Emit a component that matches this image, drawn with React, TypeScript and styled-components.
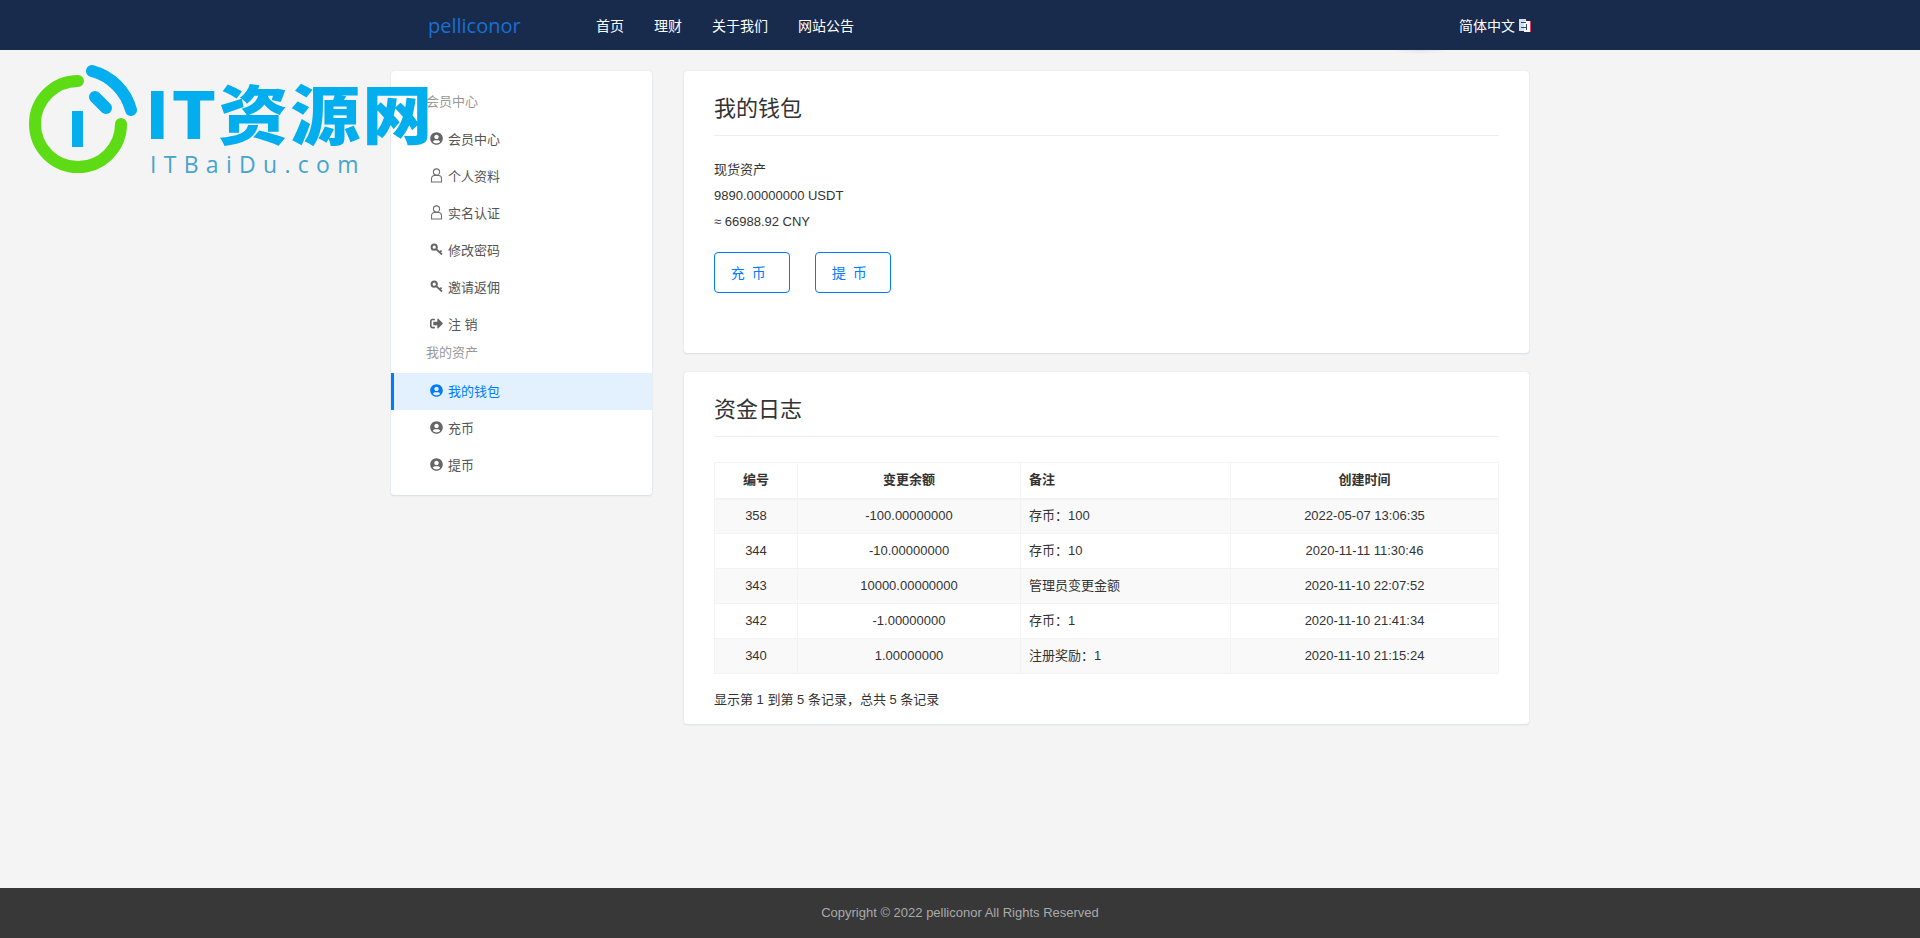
import React from "react";
import styled, { createGlobalStyle } from "styled-components";
import { FaSignOutAlt, FaUserCircle } from "react-icons/fa";

const GlobalStyle = createGlobalStyle`
  html, body {
    margin: 0;
    padding: 0;
    background: #f4f4f4;
    font-family: "Liberation Sans", "Noto Sans CJK SC", sans-serif;
    font-size: 13px;
    color: #333;
  }
  * { box-sizing: border-box; }
`;

const Page = styled.div`
  position: relative;
  min-height: 938px;
  display: flex;
  flex-direction: column;
`;

const Header = styled.header`
  position: relative;
  height: 50px;
  background: #182b4d;
`;

const HeaderInner = styled.div`
  width: 1140px;
  height: 50px;
  margin: 0 auto;
  padding-left: 38px;
  display: flex;
  align-items: center;
`;

const Brand = styled.div`
  width: 168px;
  font-family: "Open Sans", sans-serif;
  font-size: 20px;
  color: #1a6fd0;
`;

const NavLinks = styled.nav`
  display: flex;
  gap: 30px;
  flex: 1;
`;

const NavLink = styled.a`
  font-size: 14px;
  color: #fff;
`;

const Lang = styled.div`
  display: flex;
  align-items: center;
  gap: 3px;
  font-size: 14px;
  color: #fff;
  margin-right: -2px;
`;

const DropShadow = styled.div`
  position: absolute;
  left: 1393px;
  top: 50px;
  width: 54px;
  height: 4px;
  border-radius: 0 0 50% 50%;
  background: radial-gradient(ellipse at top, #e2e3e9, #f4f4f4 75%);
`;

const Main = styled.main`
  flex: 1;
  width: 1138px;
  margin: 0 auto;
  padding-top: 21px;
  display: flex;
  align-items: flex-start;
  gap: 32px;
`;

const Card = styled.section`
  background: #fff;
  border-radius: 3px;
  box-shadow: 0 0 1px #b9cfe6, 0 1px 2px #d8e0e8;
`;

const Sidebar = styled(Card)`
  width: 261px;
  height: 424px;
  padding-top: 13px;
`;

const SideTitle = styled.div<{ $tight?: boolean }>`
  height: ${(p) => (p.$tight ? "20px" : "37px")};
  margin-bottom: ${(p) => (p.$tight ? "10px" : "0")};
  padding-left: 35px;
  padding-bottom: ${(p) => (p.$tight ? "0" : "2px")};
  line-height: ${(p) => (p.$tight ? "20px" : "35px")};
  color: #999;
`;

const SideItem = styled.a<{ $active?: boolean }>`
  height: 37px;
  display: flex;
  align-items: center;
  padding-left: ${(p) => (p.$active ? "36px" : "39px")};
  padding-bottom: 2px;
  color: ${(p) => (p.$active ? "#007bff" : "#555")};
  background: ${(p) => (p.$active ? "#e3f0fe" : "transparent")};
  border-left: ${(p) => (p.$active ? "3px solid #007bff" : "none")};
`;

const IconSlot = styled.span<{ $active?: boolean }>`
  width: 18px;
  display: flex;
  align-items: center;
  color: ${(p) => (p.$active ? "#007bff" : "#666")};

  svg {
    width: 13px;
    height: 13px;
  }
`;

const UserSvg = styled.svg`
  && {
    width: 13px;
    height: 15px;
  }
`;

const UserOutline = () => (
  <UserSvg viewBox="0 0 13 15" fill="none" stroke="#6f6f6f" strokeWidth="1.1">
    <circle cx="6.5" cy="4" r="3.1" />
    <path d="M1.5 14 V10.5 a3 3 0 0 1 3-3 h4 a3 3 0 0 1 3 3 V14 Z" />
  </UserSvg>
);

const KeyGlyph = () => (
  <svg viewBox="0 0 13 13" fill="none" stroke="#666">
    <circle cx="4.2" cy="4.2" r="2.6" strokeWidth="2" />
    <path d="M6.2 6.2 L12 11.5 M9.6 9.2 L11.6 7.6" strokeWidth="1.8" />
  </svg>
);

const Content = styled.div`
  width: 845px;
  display: flex;
  flex-direction: column;
  gap: 19px;
`;

const Panel = styled(Card)`
  padding: 0 30px;
`;

const WalletPanel = styled(Panel)`
  height: 282px;
`;

const LogPanel = styled(Panel)`
  height: 352px;
`;

const PanelTitle = styled.h2<{ $flush?: boolean }>`
  margin: 0 0 ${(p) => (p.$flush ? "0" : "21px")};
  height: 65px;
  padding-top: 24px;
  line-height: 28px;
  font-size: 22px;
  font-weight: 400;
  color: #333;
  border-bottom: 1px solid #ebeef0;
`;

const InfoLine = styled.div`
  height: 26px;
  line-height: 26px;
  color: #333;
`;

const ButtonRow = styled.div`
  display: flex;
  gap: 25px;
  margin-top: 17px;
`;

const OutlineButton = styled.button`
  width: 76px;
  height: 41px;
  padding: 0 6px 2px 0;
  background: #fff;
  border: 1px solid #007bff;
  border-radius: 4px;
  font-family: inherit;
  font-size: 14px;
  color: #007bff;
  letter-spacing: 1.5px;
`;

const Table = styled.table`
  width: 784px;
  margin-top: 25px;
  border-collapse: collapse;
  table-layout: fixed;
`;

const Col = styled.col<{ $w: number }>`
  width: ${(p) => p.$w}px;
`;

const Th = styled.th<{ $left?: boolean }>`
  height: 36px;
  padding: 0 8px;
  line-height: 18px;
  font-weight: 700;
  color: #333;
  text-align: ${(p) => (p.$left ? "left" : "center")};
  border: 1px solid #f3f3f3;
  border-bottom-width: 2px;
`;

const Tr = styled.tr<{ $odd?: boolean }>`
  background: ${(p) => (p.$odd ? "#f9f9f9" : "#fff")};
`;

const Td = styled.td<{ $left?: boolean }>`
  height: 35px;
  padding: 0 8px;
  line-height: 18px;
  color: #333;
  text-align: ${(p) => (p.$left ? "left" : "center")};
  border: 1px solid #f3f3f3;
`;

const TableInfo = styled.div`
  margin-top: 16px;
  line-height: 20px;
  color: #333;
`;

const Footer = styled.footer`
  height: 50px;
  padding-bottom: 2px;
  background: #383838;
  display: flex;
  align-items: center;
  justify-content: center;
  color: #aaa;
`;

const LogoBox = styled.div`
  position: absolute;
  left: 24px;
  top: 64px;
  display: flex;
`;

const LogoMark = styled.svg`
  width: 116px;
  height: 116px;
  flex: none;
`;

const LogoText = styled.div`
  margin-left: 5px;
  display: flex;
  flex-direction: column;
`;

const LogoName = styled.div`
  height: 80px;
  margin-top: 7px;
  font-family: "Noto Sans CJK SC", sans-serif;
  font-size: 70px;
  line-height: 80px;
  font-weight: 900;
  letter-spacing: 2px;
  color: #03aeee;
  white-space: nowrap;
  transform: scaleY(0.92);
`;

const LogoSub = styled.div`
  margin-left: 5px;
  font-family: "Open Sans", sans-serif;
  font-size: 23px;
  line-height: 26px;
  letter-spacing: 7.3px;
  color: #46a5cd;
  white-space: nowrap;
`;

const navLinks = ["首页", "理财", "关于我们", "网站公告"];

const rows = [
  ["358", "-100.00000000", "存币：100", "2022-05-07 13:06:35"],
  ["344", "-10.00000000", "存币：10", "2020-11-11 11:30:46"],
  ["343", "10000.00000000", "管理员变更金额", "2020-11-10 22:07:52"],
  ["342", "-1.00000000", "存币：1", "2020-11-10 21:41:34"],
  ["340", "1.00000000", "注册奖励：1", "2020-11-10 21:15:24"],
];

export default function App() {
  return (
    <Page>
      <GlobalStyle />
      <Header>
        <HeaderInner>
          <Brand>pelliconor</Brand>
          <NavLinks>
            {navLinks.map((l) => (
              <NavLink key={l}>{l}</NavLink>
            ))}
          </NavLinks>
          <Lang>
            简体中文
            <svg width="14" height="15" viewBox="0 0 14 15">
              <rect x="1" y="1" width="7" height="12" fill="#cfdcea" />
              <rect x="6" y="3" width="7" height="11" fill="#f4f7fb" />
              <rect x="12" y="3" width="1" height="11" fill="#e04050" />
              <rect x="3" y="4" width="5" height="1" fill="#31476e" />
              <rect x="3" y="9" width="6" height="1" fill="#31476e" />
              <rect x="8" y="6" width="1" height="6" fill="#31476e" />
            </svg>
          </Lang>
        </HeaderInner>
        <DropShadow />
      </Header>

      <Main>
        <Sidebar>
          <SideTitle>会员中心</SideTitle>
          <SideItem><IconSlot><FaUserCircle /></IconSlot>会员中心</SideItem>
          <SideItem><IconSlot><UserOutline /></IconSlot>个人资料</SideItem>
          <SideItem><IconSlot><UserOutline /></IconSlot>实名认证</SideItem>
          <SideItem><IconSlot><KeyGlyph /></IconSlot>修改密码</SideItem>
          <SideItem><IconSlot><KeyGlyph /></IconSlot>邀请返佣</SideItem>
          <SideItem><IconSlot><FaSignOutAlt /></IconSlot>注 销</SideItem>
          <SideTitle $tight>我的资产</SideTitle>
          <SideItem $active><IconSlot $active><FaUserCircle /></IconSlot>我的钱包</SideItem>
          <SideItem><IconSlot><FaUserCircle /></IconSlot>充币</SideItem>
          <SideItem><IconSlot><FaUserCircle /></IconSlot>提币</SideItem>
        </Sidebar>

        <Content>
          <WalletPanel>
            <PanelTitle>我的钱包</PanelTitle>
            <InfoLine>现货资产</InfoLine>
            <InfoLine>9890.00000000 USDT</InfoLine>
            <InfoLine>≈ 66988.92 CNY</InfoLine>
            <ButtonRow>
              <OutlineButton>充 币</OutlineButton>
              <OutlineButton>提 币</OutlineButton>
            </ButtonRow>
          </WalletPanel>

          <LogPanel>
            <PanelTitle $flush>资金日志</PanelTitle>
            <Table>
              <colgroup>
                <Col $w={83} />
                <Col $w={223} />
                <Col $w={210} />
                <Col $w={268} />
              </colgroup>
              <thead>
                <tr>
                  <Th>编号</Th>
                  <Th>变更余额</Th>
                  <Th $left>备注</Th>
                  <Th>创建时间</Th>
                </tr>
              </thead>
              <tbody>
                {rows.map((r, i) => (
                  <Tr key={r[0]} $odd={i % 2 === 0}>
                    <Td>{r[0]}</Td>
                    <Td>{r[1]}</Td>
                    <Td $left>{r[2]}</Td>
                    <Td>{r[3]}</Td>
                  </Tr>
                ))}
              </tbody>
            </Table>
            <TableInfo>显示第 1 到第 5 条记录，总共 5 条记录</TableInfo>
          </LogPanel>
        </Content>
      </Main>

      <Footer>Copyright © 2022 pelliconor All Rights Reserved</Footer>

      <LogoBox>
        <LogoMark viewBox="24 64 116 116">
          <path d="M78 81 A43 43 0 1 0 121 124" fill="none" stroke="#5ddc16" strokeWidth="12" strokeLinecap="round" />
          <path d="M92 71 A55 55 0 0 1 131 110" fill="none" stroke="#05aeee" strokeWidth="12" strokeLinecap="round" />
          <path d="M95 97 L106 108" fill="none" stroke="#05aeee" strokeWidth="12" strokeLinecap="round" />
          <rect x="72" y="111" width="11" height="36" fill="#05aeee" />
        </LogoMark>
        <LogoText>
          <LogoName>IT资源网</LogoName>
          <LogoSub>ITBaiDu.com</LogoSub>
        </LogoText>
      </LogoBox>
    </Page>
  );
}
